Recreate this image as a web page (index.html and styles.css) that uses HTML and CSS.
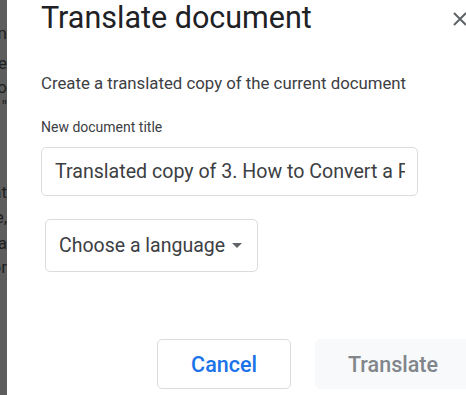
FILE: index.html
```html
<!DOCTYPE html>
<html lang="en">
<head>
    <meta charset="UTF-8">
    <meta name="viewport" content="width=device-width, initial-scale=1.0">
    <title>Translate document</title>
    <link rel="stylesheet" href="styles.css">
</head>
<body>
    <!-- Page behind the dialog -->
    <div class="backdrop">
        <div class="line l1"><span>Documentation</span></div>
        <div class="line l2"><span>Machine</span></div>
        <div class="line l3"><span>Into</span></div>
        <div class="line l4"><span>"</span></div>
        <div class="line l5"><span>that</span></div>
        <div class="line l6"><span>here,</span></div>
        <div class="line l7"><span>data</span></div>
        <div class="line l8"><span>for</span></div>
    </div>

    <!-- Dialog -->
    <div class="dialog">
        <div class="dialog-head">
            <h1 class="dialog-title">Translate document</h1>
            <button class="close" aria-label="Close">
                <svg width="16" height="16" viewBox="0 0 16 16">
                    <path d="M2 2 L14 14 M14 2 L2 14" stroke="#5f6368" stroke-width="2" fill="none"/>
                </svg>
            </button>
        </div>

        <p class="intro">Create a translated copy of the current document</p>

        <label class="field-label" for="docTitle">New document title</label>
        <div class="field">
            <input id="docTitle" type="text" value="Translated copy of 3. How to Convert a PDF to Word">
        </div>

        <div class="select">
            <span>Choose a language</span>
            <span class="caret"></span>
        </div>

        <div class="actions">
            <button class="btn btn-cancel">Cancel</button>
            <button class="btn btn-translate" disabled>Translate</button>
        </div>
    </div>
</body>
</html>
```

FILE: styles.css
```css
body {
    margin: 0;
    height: 395px;
    display: flex;
    background-color: #ffffff;
    font-family: Roboto, Arial, sans-serif;
    overflow: hidden;
}

/* Page behind */
.backdrop {
    width: 7px;
    flex-shrink: 0;
    background-color: #5d5d5d;
    overflow: hidden;
}

.backdrop .line {
    display: flex;
    justify-content: flex-end;
    height: 14px;
    font-size: 17px;
    line-height: 14px;
    color: #1f1f1f;
    white-space: nowrap;
}

.backdrop .l1 { margin-top: 26px; }
.backdrop .l2 { margin-top: 16px; }
.backdrop .l3 { margin-top: 10px; }
.backdrop .l4 { margin-top: 5px; }
.backdrop .l5 { margin-top: 72px; }
.backdrop .l6 { margin-top: 11px; }
.backdrop .l7 { margin-top: 12px; }
.backdrop .l8 { margin-top: 10px; }

/* Dialog */
.dialog {
    flex: 1;
    min-width: 0;
    padding-left: 34px;
    display: flex;
    flex-direction: column;
    align-items: flex-start;
}

.dialog-head {
    width: 100%;
    display: flex;
    justify-content: space-between;
    align-items: flex-start;
}

.dialog-title {
    margin: 0;
    padding-top: 1px;
    font-size: 30.5px;
    font-weight: 400;
    line-height: 34px;
    color: #202124;
    white-space: nowrap;
}

.close {
    margin-top: 11px;
    margin-right: -2px;
    padding: 0;
    border: none;
    background: none;
    width: 16px;
    height: 16px;
}

.intro {
    margin: 38px 0 0;
    font-size: 16.8px;
    line-height: 20px;
    color: #3c4043;
}

.field-label {
    margin-top: 24px;
    font-size: 14px;
    line-height: 20px;
    color: #3c4043;
}

.field {
    margin-top: 10px;
    width: 377px;
    height: 49px;
    box-sizing: border-box;
    border: 1px solid #dadce0;
    border-radius: 5px;
    overflow: hidden;
}

.field input {
    width: 100%;
    height: 100%;
    box-sizing: border-box;
    padding: 0 12px 0 13px;
    border: none;
    outline: none;
    font-family: Roboto, Arial, sans-serif;
    font-size: 19.6px;
    color: #3c4043;
    background: transparent;
}

.select {
    margin: 23px 0 0 4px;
    width: 213px;
    height: 53px;
    box-sizing: border-box;
    padding: 0 13px;
    border: 1px solid #dadce0;
    border-radius: 5px;
    display: flex;
    align-items: center;
    gap: 7px;
    font-size: 19.5px;
    color: #3c4043;
}

.caret {
    width: 0;
    height: 0;
    border-left: 5px solid transparent;
    border-right: 5px solid transparent;
    border-top: 5px solid #5f6368;
}

.actions {
    margin-top: 67px;
    margin-right: -5px;
    align-self: stretch;
    display: flex;
    justify-content: flex-end;
    gap: 24px;
}

.btn {
    height: 50px;
    box-sizing: border-box;
    border-radius: 5px;
    font-family: Roboto, Arial, sans-serif;
    font-size: 21.5px;
    font-weight: 500;
}

.btn-cancel {
    width: 134px;
    border: 1px solid #dadce0;
    background: #ffffff;
    color: #1a73e8;
}

.btn-translate {
    width: 156px;
    border: none;
    background: #f8f9fa;
    color: #80868b;
}
```
